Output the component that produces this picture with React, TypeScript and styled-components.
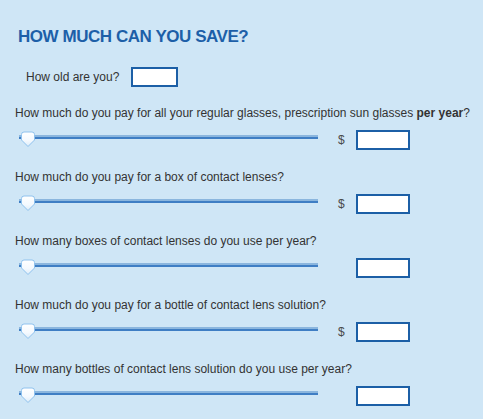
import React from "react";
import styled, { createGlobalStyle } from "styled-components";

const Global = createGlobalStyle`
  html, body { margin: 0; padding: 0; background: #cfe6f6; }
  body { font-family: "Liberation Sans", Arial, sans-serif; color: #333; }
`;

const Page = styled.div`
  width: 483px;
  height: 419px;
  background: #cfe6f6;
  padding: 27px 0 0 15px;
  box-sizing: border-box;
  overflow: hidden;
`;

const Title = styled.h2`
  margin: 0 0 0 3px;
  font-size: 17px;
  line-height: 20px;
  font-weight: bold;
  color: #1d5fa8;
  letter-spacing: -0.45px;
`;

const AgeRow = styled.div`
  display: flex;
  align-items: center;
  gap: 12px;
  margin: 20px 0 0 11px;
  font-size: 12px;
`;

const Questions = styled.div`
  margin-top: 18px;
`;

const Question = styled.div`
  display: flex;
  flex-direction: column;
  height: 64px;
`;

const Label = styled.div`
  font-size: 12px;
  line-height: 16px;
  height: 16px;
  white-space: nowrap;
  b { font-weight: bold; }
`;

const Controls = styled.div`
  display: flex;
  align-items: center;
  height: 20px;
  margin-top: 9px;
  padding-left: 4px;
`;

const Track = styled.div`
  position: relative;
  width: 299px;
  height: 4px;
  margin-bottom: 7px;
  background: linear-gradient(to bottom, #8bb6de 0, #8bb6de 50%, #3f7ec4 50%, #3f7ec4 100%);
`;

const Thumb = styled.svg`
  position: absolute;
  left: 1px;
  top: -4px;
`;

const Currency = styled.span`
  width: 18px;
  margin-left: 20px;
  font-size: 12px;
  color: #4a4a4a;
`;

const Box = styled.input<{ $w: number; $h: number }>`
  width: ${(p) => p.$w}px;
  height: ${(p) => p.$h}px;
  box-sizing: border-box;
  border: 2px solid #1c5fa6;
  background: #fff;
  padding: 0 3px;
  margin: 0;
  font: 12px "Liberation Sans", Arial, sans-serif;
  outline: none;
`;

const Slider = () => (
  <Track>
    <Thumb width="17" height="17" viewBox="0 0 17 17">
      <defs>
        <linearGradient id="tg" x1="0" y1="0" x2="0" y2="1">
          <stop offset="0" stopColor="#ffffff" />
          <stop offset="0.6" stopColor="#f4f9fe" />
          <stop offset="1" stopColor="#dcecf9" />
        </linearGradient>
      </defs>
      <path
        d="M1.5 3.5 Q1.5 1 4 1 L12 1 Q14.5 1 14.5 3.5 L14.5 9 L8 15.5 L1.5 9 Z"
        fill="url(#tg)"
        stroke="#8fc2ee"
        strokeWidth="1"
      />
    </Thumb>
  </Track>
);

const questions: { label: React.ReactNode; dollar: boolean }[] = [
  {
    label: (
      <>
        How much do you pay for all your regular glasses, prescription sun glasses <b>per year</b>?
      </>
    ),
    dollar: true,
  },
  { label: "How much do you pay for a box of contact lenses?", dollar: true },
  { label: "How many boxes of contact lenses do you use per year?", dollar: false },
  { label: "How much do you pay for a bottle of contact lens solution?", dollar: true },
  { label: "How many bottles of contact lens solution do you use per year?", dollar: false },
];

export default function App() {
  return (
    <Page>
      <Global />
      <Title>HOW MUCH CAN YOU SAVE?</Title>
      <AgeRow>
        <span>How old are you?</span>
        <Box $w={47} $h={20} />
      </AgeRow>
      <Questions>
        {questions.map((q, i) => (
          <Question key={i}>
            <Label>{q.label}</Label>
            <Controls>
              <Slider />
              <Currency>{q.dollar ? "$" : ""}</Currency>
              <Box $w={54} $h={20} />
            </Controls>
          </Question>
        ))}
      </Questions>
    </Page>
  );
}
